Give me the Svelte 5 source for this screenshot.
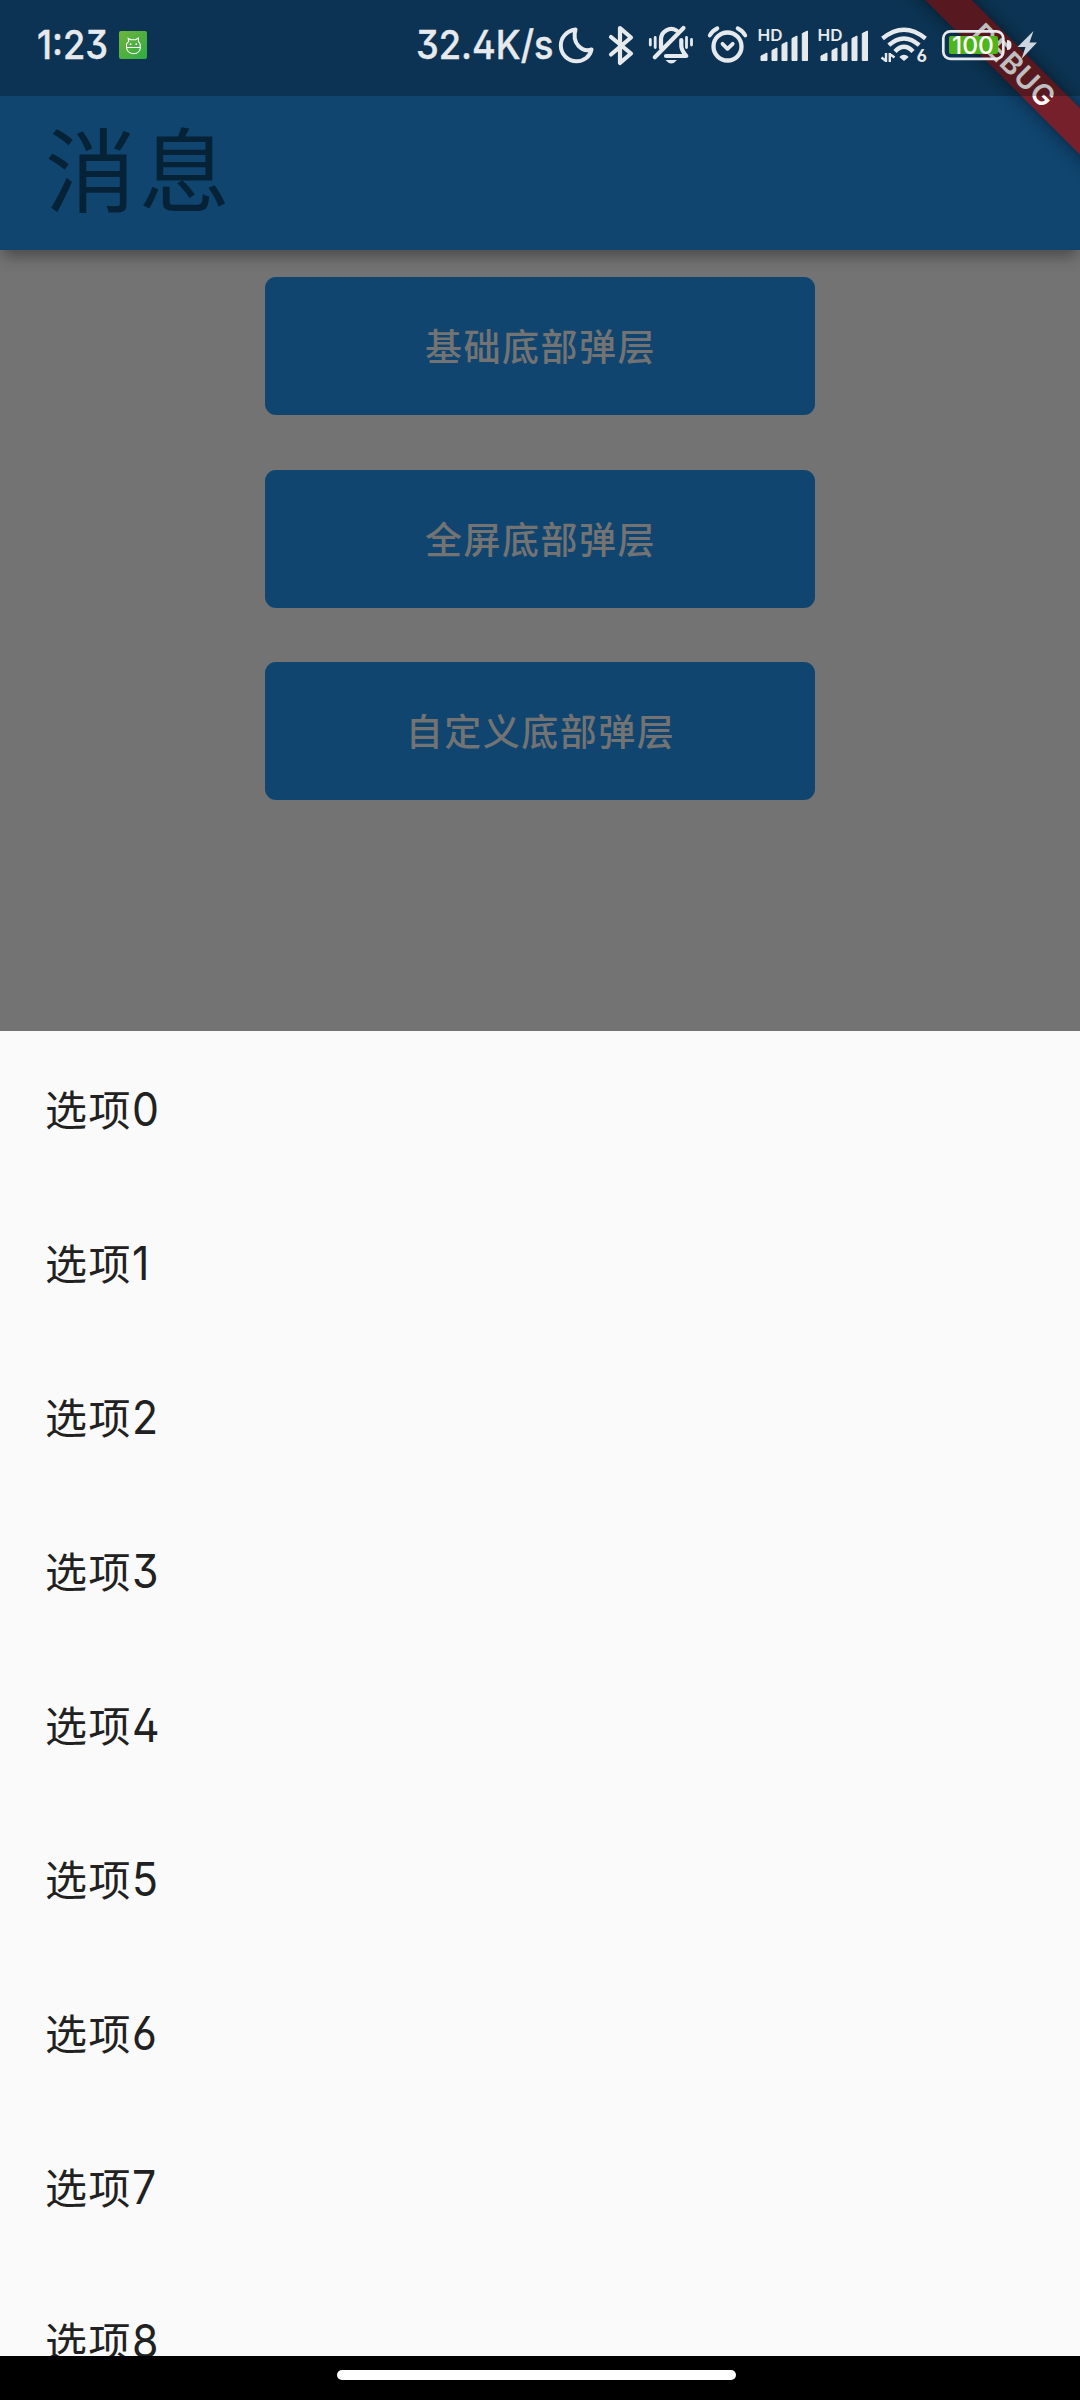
<script>
  const actions = ['基础底部弹层', '全屏底部弹层', '自定义底部弹层'];
  const options = Array.from({ length: 9 }, (_, i) => i);
</script>

<div class="screen">
  <header class="top">
    <div class="status">
      <svg class="time" width="76" height="64" viewBox="0 -8 76 64">
        <text x="0" y="38" textLength="71" lengthAdjust="spacingAndGlyphs" class="big">1:23</text>
      </svg>
      <svg class="app-icon" width="28" height="28" viewBox="0 0 28 28">
        <defs>
          <linearGradient id="leaf" x1="0" y1="0" x2="1" y2="1">
            <stop offset="0" stop-color="#6fb53a" />
            <stop offset="1" stop-color="#2fab43" />
          </linearGradient>
        </defs>
        <rect width="28" height="28" rx="2" fill="url(#leaf)" />
        <path d="M7.500 16.500V13L9.700 10.400 9.200 7.200l2.800 1.500h4.600l2.800-1.700v3.300l1.800 2.900v3.300M7.500 16.500h13.900q-.5 6-6.900 6.200Q8 22.200 7.500 16.500z" fill="none" stroke="#fff" stroke-width="1.100" />
        <circle cx="11.600" cy="13.200" r=".9" fill="#fff" /><circle cx="17.300" cy="13.200" r=".9" fill="#fff" />
      </svg>
      <svg class="speed" width="142" height="64" viewBox="0 -8 142 64">
        <text x="0" y="38" textLength="137.500" lengthAdjust="spacingAndGlyphs" class="big">32.4K/s</text>
      </svg>
      <svg class="moon" width="36" height="38" viewBox="558 26 36 38">
        <path d="M575.500 29.500C566 31 560.800 38 560.800 45.500 560.800 54.500 568 61.200 576.500 61.200 584 61.200 590 56.500 591.500 49.500 582 52.500 571.500 43.500 575.500 29.500z" class="line" stroke-width="4" />
      </svg>
      <svg class="bt" width="26" height="41" viewBox="608 24 26 41">
        <path d="M611 36l20 16.500-11 9.500V27l11 9.500L611 53.500" class="line" stroke-width="4.200" />
      </svg>
      <svg class="bell" width="46" height="40" viewBox="648 26 46 40">
        <path d="M650.300 40.500v5.500M655.200 38.500v10M686.500 38.500v10M691.500 40.500v5.500" class="line" stroke-width="2.800" />
        <path d="M661 49V40a10.300 10.300 0 0 1 15.500-8.500M654.800 58.200L683.500 29M681.300 41v6q0 4 5 10H666" class="line" stroke-width="4.200" />
        <path d="M665.500 61h11.500q-5.700 7-11.500 0z" class="solid" />
      </svg>
      <svg class="alarm" width="42" height="40" viewBox="707 25 42 40">
        <circle cx="727.500" cy="46.500" r="14" class="line" stroke-width="4.300" />
        <path d="M722.500 43.800l5 5 5.200-5" class="line" stroke-width="3.800" />
        <path d="M709.800 35.400q2.500-4.500 7.500-7M745.200 35.400q-2.500-4.500-7.500-7" class="line" stroke-width="4" />
      </svg>
      {#each [0, 1] as sim (sim)}
        <svg class="signal" width="52" height="50" viewBox="757 20 52 50">
          <text x="757.500" y="41" textLength="25" lengthAdjust="spacingAndGlyphs" class="hd">HD</text>
          <path d="M761 56L767 53V60.500H761zM772 50.500L777 48V60.500H772zM782 44.500L787 42V60.500H782zM792 38.500L797 36V60.500H792zM802.300 33.500L807.500 31V60.500H802.300z" class="solid bars" />
        </svg>
      {/each}
      <svg class="wifi" width="48" height="50" viewBox="880 21 48 50">
        <path d="M882.500 39.500q21.500-17.500 43 0M888.800 46.200q15.200-13.500 30.400 0M895 52.500q9-9.500 18 0" class="wave" />
        <path d="M899.300 58q4.700-4.500 9.400 0l-4.700 4z" class="solid" />
        <path d="M886 54v9M881.500 58.500L886 62M889.800 63v-9M889.800 55L894.500 58.500" class="arrows" />
        <text x="916.500" y="63" class="six">6</text>
      </svg>
      <svg class="battery" width="72" height="44" viewBox="941 23 72 44">
        <rect x="943.300" y="31.300" width="60" height="27.500" rx="7" class="line" stroke-width="2.700" />
        <rect x="949" y="36" width="49" height="18" rx="2" fill="#4eb51b" />
        <path d="M1007 40q4.500 0 4.500 5t-4.500 5z" class="solid" />
        <text x="952" y="53.600" textLength="42" lengthAdjust="spacingAndGlyphs" class="charge">100</text>
      </svg>
      <svg class="bolt" width="20" height="30" viewBox="1017 30 20 30">
        <path d="M1033.500 31l-16 16h8l-4 12L1037 42.500h-7.500z" fill="#ced7df" />
      </svg>
    </div>
    <h1>消息</h1>
    <div class="ribbon-box"><div class="ribbon">DEBUG</div></div>
  </header>

  <main>
    {#each actions as label (label)}
      <button>{label}</button>
    {/each}
  </main>

  <section class="sheet">
    {#each options as n (n)}
      <div class="row">选项<span>{n}</span></div>
    {/each}
  </section>

  <footer><div class="pill"></div></footer>
</div>

<style>
  :global(body) {
    margin: 0;
    background: #000;
  }
  .screen {
    width: 1080px;
    height: 2400px;
    display: flex;
    flex-direction: column;
    overflow: hidden;
    background: #737373;
    font-family: 'Noto Sans CJK SC', sans-serif;
  }
  .top {
    position: relative;
    z-index: 1;
    flex: none;
    height: 250px;
    background: #10456f;
    box-shadow: 0 9px 14px -3px rgba(0, 0, 0, 0.36);
  }
  .status {
    position: relative;
    z-index: 2;
    height: 96px;
    box-sizing: border-box;
    padding: 0 43px 6px 37px;
    display: flex;
    align-items: center;
    background: rgba(0, 0, 0, 0.25);
  }
  svg {
    display: block;
    flex: none;
  }
  .big {
    font: 500 40px 'Inter', sans-serif;
    font-feature-settings: 'ss01', 'cv09';
    fill: #e7eaed;
    stroke: #e7eaed;
    stroke-width: 0.4;
  }
  .app-icon { margin-left: 6px; }
  .speed { margin-left: auto; }
  .bt { margin-left: 14px; }
  .bell { margin-left: 14px; }
  .alarm { margin-left: 13px; }
  .signal { margin-left: 8px; }
  .wifi { margin-left: 11px; }
  .battery { margin-left: 13px; }
  .bolt { margin-left: 4px; }
  .line {
    fill: none;
    stroke: #e7eaed;
    stroke-linecap: round;
    stroke-linejoin: round;
  }
  .solid { fill: #e7eaed; }
  .bars {
    stroke: #e7eaed;
    stroke-width: 1;
    stroke-linejoin: round;
  }
  .wave {
    fill: none;
    stroke: #e7eaed;
    stroke-width: 4.4;
  }
  .arrows {
    fill: none;
    stroke: #e7eaed;
    stroke-width: 2.4;
  }
  .hd {
    font: 600 16px 'Inter', sans-serif;
    fill: #e7eaed;
  }
  .six {
    font: 700 17px 'Inter', sans-serif;
    font-feature-settings: 'ss01';
    fill: #e7eaed;
  }
  .charge {
    font: 500 24px 'Inter', sans-serif;
    fill: #fff;
  }
  h1 {
    margin: 0;
    padding-left: 45px;
    height: 154px;
    line-height: 139px;
    font-size: 91px;
    font-weight: 400;
    letter-spacing: 3px;
    color: #062237;
  }
  .ribbon-box {
    position: absolute;
    z-index: 1;
    top: 0;
    right: 0;
    width: 250px;
    height: 250px;
    overflow: hidden;
  }
  .ribbon {
    position: absolute;
    left: 34px;
    top: 49px;
    width: 300px;
    height: 33px;
    transform: rotate(45deg);
    background: #75202a;
    box-shadow: 0 0 17px rgba(0, 0, 0, 0.5);
    color: #fff;
    text-align: center;
    font-family: 'Inter', sans-serif;
    font-size: 29px;
    font-weight: 600;
    letter-spacing: 0.8px;
    line-height: 33px;
  }
  main {
    flex: none;
    height: 781px;
    box-sizing: border-box;
    padding-top: 27px;
    display: flex;
    flex-direction: column;
    align-items: center;
    gap: 54.5px;
  }
  button {
    width: 550px;
    height: 138px;
    border: 0;
    padding: 0 0 2px 1px;
    border-radius: 11px;
    background: #10456f;
    color: #737373;
    font: 500 37px 'Noto Sans CJK SC', sans-serif;
    letter-spacing: 1.5px;
  }
  .sheet {
    flex: 1;
    min-height: 0;
    overflow: hidden;
    background: #fafafa;
  }
  .row {
    height: 154px;
    box-sizing: border-box;
    padding: 0 44px 0 45px;
    display: flex;
    align-items: baseline;
    line-height: 153px;
    color: #212121;
    font-size: 42px;
    letter-spacing: 1.5px;
    white-space: nowrap;
  }
  .row span {
    transform: scaleX(0.93);
    transform-origin: left;
    font-family: 'Inter', sans-serif;
    font-feature-settings: 'ss01', 'cv09';
    font-size: 46px;
    line-height: 1;
    letter-spacing: 0;
  }
  footer {
    flex: none;
    height: 44px;
    box-sizing: border-box;
    padding: 14px 0 0 337px;
    background: #000;
  }
  .pill {
    width: 399px;
    height: 10px;
    border-radius: 5px;
    background: #fff;
  }
</style>
